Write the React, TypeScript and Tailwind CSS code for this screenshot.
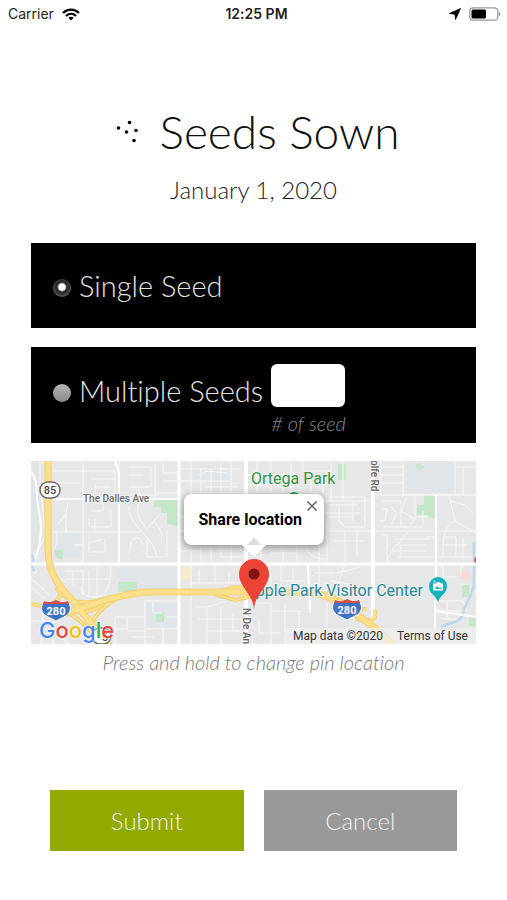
import { useState } from "react";

const BLOCK_STREETS = [
  // north west
  "M9 0V24L12 50L14 75L4 96V103M52 0V10H84V38M52 10V38M22 10H52M22 22H50M60 18H84M64 22V34M64 26H80",
  "M88 0V103M98 6H120V26H98M98 14H112M108 26V34M124 2V32H146M132 0V12H146M132 20H146M98 34H128",
  "M22 38H148M22 71H110M37 41L35 53L27 63M35 53V71M52 38V103M60 50H72V38M58 58V66H80M64 58V71M80 50V66",
  "M58 80V92M58 82L72 78M60 91H74V78M98 46C98 58 104 62 112 72C120 80 124 88 126 96M110 38C104 50 106 56 116 68M116 68L128 54M122 60C130 66 132 76 130 82",
  "M112 84C110 76 102 74 100 82L98 94M116 78V96H126M136 70V96H126M26 71V84M52 84H42",
  // south west
  "M22 103V112L34 120M34 110H52V134M34 118H80M66 103V136M80 106C80 124 76 136 64 136C54 136 50 132 50 126M42 110V124M58 110V134",
  "M0 118L8 124L18 134M0 126L14 138M6 110L0 116M12 150L10 183M22 160V183M30 176L38 183M0 160H14",
  "M84 183V156H114M96 156V170H114M114 183V140H148M84 168H96M122 140V152H132M114 168H148M136 156H148M132 168V183M100 176H124",
  // north centre
  "M160 0V183M148 8H210M148 20H200M170 8V32M180 8V32M190 0V32M200 0V32M160 32H215M168 14L176 10L196 12M174 26H208",
  "M215 14H260M226 0V32M240 0V32M252 14V32M215 24H240M260 0V32M272 0V10H300M280 18V32M292 18V32M300 0V40M312 0V38",
  "M148 56H215M148 70H214M160 80H215M170 86V103M180 86V103M190 80V96H215M200 80V103M148 90H170",
  "M230 86V103M240 92H266M252 84V103M266 84V103M276 84C276 94 284 98 294 98M288 84V103M292 40H340M294 52H330M296 62V103",
  "M298 36H334M298 44H326M298 56H322M308 44V60L314 66H334M322 40V60M334 34V66M298 70H445M314 70V100M326 70V96M302 80H334",
  // south centre
  "M164 146H176V183M166 158H210M176 146L196 140M176 170H212M190 146V183M202 152V170M160 122H212M168 108V122M184 103V122M198 110V122",
  "M222 142H240V183M240 150H272M254 142V183M228 160V172H250M254 170H282M268 150V170M276 103L280 150M296 142V183",
  "M222 112H240V124M230 103V124M250 103V120H274M262 108V126M284 112H304M288 103V126M306 112L330 106M314 103L308 120M300 120L324 124",
  // north east
  "M350 0V34H445M372 0V34M350 6H372M350 14H372M350 22H372M424 0V34M424 6H445M432 6V34M342 34H445",
  "M350 40H370V66M350 48H356L354 60H348M360 46L366 52L360 64M376 36L370 50L384 58L378 66M384 34V56H398M392 50V64M352 66H392",
  "M350 74H356V100M356 100L364 84H396M364 78H400M362 90H396M370 84V96M366 96H404M378 70L366 84M394 76H404",
  "M418 34L424 60C414 66 412 72 412 96M424 60L445 72M420 40L434 44L442 52M412 76H425V96M412 84H436M404 96H445M432 76V96",
  // south east
  "M404 140H432L436 150H410M404 148L424 152L445 156M410 158H430M404 150V168M416 140V156M412 103V116H425M430 103V116",
];

const RAMPS = [
  "M17 98C20 116 30 120 30 130C30 136 24 142 18 146",
  "M0 143C14 146 26 146 38 152C48 158 58 166 70 183",
  "M26 128C36 142 54 144 74 138",
  "M40 150C56 154 66 148 82 138",
  "M60 164C66 150 76 144 88 136",
  "M186 131L204 126L226 128",
  "M186 134L204 139L228 134",
  "M298 132C310 138 318 150 334 148",
  "M326 158C342 162 346 158 344 150",
];

const FREEWAYS = [
  "M17 -4V88C17 112 28 126 42 140L80 187",
  "M36 152C60 144 84 134 116 131H266C298 131 304 140 326 154C338 162 350 170 364 187",
];

function HighwayShield({ x, y }: { x: number; y: number }) {
  return (
    <g transform={`translate(${x} ${y})`}>
      <path
        d="M-12 -9C-8 -7 -4 -8 0 -10C4 -8 8 -7 12 -9C15 -4 15 0 13 3C10 7 5 8 0 11C-5 8 -10 7 -13 3C-15 0 -15 -4 -12 -9Z"
        fill="#3f74c4"
        stroke="#ffffff"
      />
      <path d="M-12 -9C-8 -7 -4 -8 0 -10C4 -8 8 -7 12 -9L13 -6H-13Z" fill="#d4504c" />
      <text y="5" textAnchor="middle" fill="#ffffff" className="text-[11px] font-bold">
        280
      </text>
    </g>
  );
}

function MapDrawing() {
  return (
    <svg
      viewBox="0 0 445 183"
      preserveAspectRatio="xMidYMid slice"
      className="block h-full w-full font-['Roboto','Liberation_Sans',sans-serif]"
      role="img"
      aria-label="Map of the selected area"
    >
      <rect width="445" height="183" fill="#e7e7e7" />

      {/* ground areas */}
      <g fill="#e1e5e8">
        <path d="M0 0H9L14 75L0 96Z" />
        <path d="M24 72H50V96H26Z" />
        <path d="M84 106H148V128L90 134Z" />
        <path d="M162 10L174 4L196 10V20H162Z" />
        <path d="M376 2H426V31H376Z" />
        <path d="M116 142H146V166H116Z" />
      </g>
      <g fill="#c5e6c8">
        <path d="M123 39H147V66L136 62V52H130V46H123Z" />
        <path d="M87 121H106V131H87Z" />
        <path d="M24 89H32V98H28L24 95Z" />
        <path d="M125 151H133V161H125Z" />
        <path d="M307 3H315V19H307Z" />
        <path d="M393 34H404V57H396V54H386V44H393Z" />
        <path d="M384 4L389 2L394 7L387 9Z" />
        <path d="M431 124H438V136H431Z" />
        <path d="M438 156H445V165H438Z" />
      </g>
      <path d="M151 106H160V118H151Z" fill="#f6edc8" />
      <path d="M428 110H440V118H428Z" fill="#f6dcd8" />

      <g fill="none" stroke="#f8f8f8">
        {BLOCK_STREETS.map((d) => (
          <path key={d} d={d} />
        ))}
      </g>
      <path
        d="M443 81V120C443 134 434 142 432 152C428 164 420 160 410 166M0 94L3 98L0 104L3 110"
        fill="none"
        stroke="#bcd7ea"
        strokeWidth="2.500"
      />

      {/* main streets */}
      <g fill="none" stroke="#ffffff" strokeWidth="3">
        <path d="M0 103H445" />
        <path d="M148 0V183" />
        <path d="M215 0V183" strokeWidth="4" />
        <path d="M342 0V162" strokeWidth="4" />
        <path d="M405 34V116M404 140V167" strokeWidth="2" />
        <path d="M404 150L445 156" strokeWidth="2" />
        <path d="M277 103L279 152" strokeWidth="2" />
        <path d="M84 0L88 12V103" strokeWidth="2" />
        <path d="M22 38H148" strokeWidth="2" />
        <path d="M0 10C8 20 4 32 8 50C12 70 10 84 4 98" strokeWidth="2" />
      </g>

      {/* freeways */}
      <g fill="none" strokeLinecap="round">
        <g stroke="#f2cf72" strokeWidth="4">
          {RAMPS.map((d) => (
            <path key={d} d={d} />
          ))}
        </g>
        <g stroke="#fbe08c" strokeWidth="2">
          {RAMPS.map((d) => (
            <path key={d} d={d} />
          ))}
        </g>
        <g stroke="#f2cf72" strokeWidth="7">
          {FREEWAYS.map((d) => (
            <path key={d} d={d} />
          ))}
        </g>
        <g stroke="#fbe08c" strokeWidth="5">
          {FREEWAYS.map((d) => (
            <path key={d} d={d} />
          ))}
        </g>
      </g>

      <g fill="#ffffff" stroke="#6b6b6b" strokeWidth="1.500">
        <rect x="9" y="21" width="20" height="16" rx="8" />
        <rect x="61" y="167" width="19" height="16" rx="8" />
      </g>
      <g fill="#4a4a4a" textAnchor="middle" className="text-[11px] font-medium">
        <text x="19" y="33">
          85
        </text>
        <text x="74" y="180">
          5
        </text>
      </g>
      <HighwayShield x={25} y={149} />
      <HighwayShield x={316} y={148} />

      <circle cx="263" cy="38" r="7" fill="#35a345" />
      <g stroke="#f2f2f2" strokeWidth="2" paintOrder="stroke" strokeLinejoin="round">
        <text x="52" y="41" fill="#6e6e6e" className="text-[10px] font-medium">
          The Dalles Ave
        </text>
        <text x="220" y="23" fill="#35913f" className="text-base font-normal">
          Ortega Park
        </text>
        <text x="392" y="135" textAnchor="end" fill="#2a8595" className="text-base font-normal">
          pple Park Visitor Center
        </text>
        <text transform="translate(340 -1) rotate(90)" fill="#666666" className="text-[10px] font-medium">
          olfe Rd
        </text>
        <text transform="translate(212 147) rotate(90)" fill="#666666" className="text-[10px] font-medium">
          N De An
        </text>
      </g>

      {/* visitor center marker */}
      <path d="M407 141C405 134 398 133 398 125A9 9 0 0 1 416 125C416 133 409 134 407 141Z" fill="#16b0bf" />
      <path d="M402 122.500H405L406 121H409L410 122.500H412V129.500H402Z" fill="#ffffff" />
      <path d="M404 128L406 125L408 127L409 126L411 128Z" fill="#16b0bf" />
      <circle cx="403.500" cy="120.500" r="1" fill="#ffffff" />
      <circle cx="446" cy="99" r="3" fill="#e85858" />
    </svg>
  );
}

function GoogleLogo() {
  return (
    <span
      aria-label="Google"
      className="block font-['Inter','Liberation_Sans',sans-serif] text-[22px] leading-6 font-medium [text-shadow:0_0_2px_#fff,0_0_2px_#fff]"
    >
      <span className="text-[#4285f4]">G</span>
      <span className="text-[#ea4335]">o</span>
      <span className="text-[#fbbc05]">o</span>
      <span className="text-[#4285f4]">g</span>
      <span className="text-[#34a853]">l</span>
      <span className="text-[#ea4335]">e</span>
    </span>
  );
}

function StatusBar() {
  return (
    <header className="grid h-7 grid-cols-3 items-center pr-1.5 pl-2 font-['Inter','Liberation_Sans',sans-serif] text-sm text-[#222]">
      <div className="flex items-center gap-2">
        <span className="font-normal">Carrier</span>
        <svg viewBox="0 0 18 13" className="h-[13px] w-[18px]" aria-hidden="true">
          <g fill="none" stroke="#000" strokeWidth="2.200">
            <path d="M1 5C5.500 0.600 12.500 0.600 17 5" />
            <path d="M4 8C7 5.200 11 5.200 14 8" />
          </g>
          <path d="M6.300 9.800C8 8.500 10 8.500 11.700 9.800L9 12.600Z" />
        </svg>
      </div>
      <span className="pl-1 text-center font-semibold whitespace-nowrap">12:25 PM</span>
      <div className="flex items-center justify-end gap-2">
        <svg viewBox="0 0 12 12" className="size-3" aria-hidden="true">
          <path d="M11.500 0.500L6.500 11.500L6 6.200L0.500 5.500Z" stroke="#000" strokeLinejoin="round" strokeWidth="0.800" />
        </svg>
        <svg viewBox="0 0 32 14" className="h-[14px] w-8" aria-hidden="true">
          <rect x="0.800" y="0.800" width="28" height="12.400" rx="3.500" fill="#fff" stroke="#9a9a9a" strokeWidth="1.300" />
          <rect x="2.500" y="2.500" width="14.500" height="9" rx="1.500" />
          <path d="M30 4.800C31.700 5.500 31.700 8.500 30 9.200Z" fill="#8a8a8a" />
        </svg>
      </div>
    </header>
  );
}

const RADIO =
  "mt-1 size-[18px] shrink-0 appearance-none rounded-full bg-linear-to-b from-[#b5b5b5] to-[#8a8a8a] checked:bg-[radial-gradient(circle_at_50%_45%,#fff_0_3px,#222_5px,#333_7px,#555_9px)]";

export default function App() {
  const [mode, setMode] = useState("single");
  const [count, setCount] = useState("");
  const [showPopup, setShowPopup] = useState(true);

  return (
    <div className="min-h-screen bg-white font-['Lato','Liberation_Sans',sans-serif] font-light [font-variant-ligatures:none]">
      <StatusBar />

      <form className="px-[31px] pb-12" onSubmit={(e) => e.preventDefault()}>
        <div className="flex items-center justify-center gap-5 pt-[78px] pl-2">
          <svg viewBox="0 0 24 24" className="size-6" aria-hidden="true">
            <circle cx="2.500" cy="8" r="1.800" />
            <circle cx="13.500" cy="2.500" r="1.800" />
            <circle cx="10.500" cy="12" r="1.800" />
            <circle cx="20" cy="10.500" r="1.800" />
            <circle cx="18" cy="20.500" r="1.800" />
          </svg>
          <h1 className="text-[46px] leading-[52px] text-[#111]">Seeds Sown</h1>
        </div>
        <p className="pt-4 text-center text-2xl leading-8 text-[#222]">January 1, 2020</p>

        <label className="mt-[37px] flex h-[85px] items-center gap-2 bg-black px-[22px] text-[29px] leading-9 text-[#e4e4e4]">
          <input
            type="radio"
            name="mode"
            checked={mode === "single"}
            onChange={() => setMode("single")}
            className={RADIO}
          />
          Single Seed
        </label>

        <div className="mt-[19px] flex h-24 items-start gap-2 bg-black px-[22px] pt-[17px] text-[29px] leading-[54px] text-[#e4e4e4]">
          <label className="flex items-center gap-2">
            <input
              type="radio"
              name="mode"
              checked={mode === "multiple"}
              onChange={() => setMode("multiple")}
              className={RADIO}
            />
            Multiple Seeds
          </label>
          <div className="flex flex-col">
            <input
              id="seed-count"
              type="text"
              inputMode="numeric"
              value={count}
              onChange={(e) => setCount(e.target.value)}
              className="h-[43px] w-[74px] rounded-md bg-white px-2 text-xl text-black"
            />
            <label htmlFor="seed-count" className="pt-1 text-[20px] leading-6 text-[#8a8a8a] italic">
              # of seed
            </label>
          </div>
        </div>

        <div className="relative mt-[18px] h-[183px] overflow-hidden">
          <MapDrawing />

          <div className="absolute bottom-0.5 left-2">
            <GoogleLogo />
          </div>
          <div className="absolute right-0 bottom-0 flex gap-3.5 bg-[#efefef]/70 px-2 font-['Roboto','Liberation_Sans',sans-serif] text-xs leading-4 font-normal text-[#333]">
            <span>Map data ©2020</span>
            <a href="#terms">Terms of Use</a>
          </div>

          <svg viewBox="0 0 32 52" className="absolute top-[97px] left-1/2 h-[52px] w-8 -translate-x-1/2" aria-hidden="true">
            <path d="M16 51C15 36 1 29 1 16A15 15 0 0 1 31 16C31 29 17 36 16 51Z" fill="#ea4335" />
            <circle cx="16" cy="16" r="5.500" fill="#811411" />
          </svg>

          {showPopup && (
            <div className="absolute top-[33px] left-1/2 -translate-x-1/2 font-['Roboto','Liberation_Sans',sans-serif]">
              <div className="flex h-[51px] w-[140px] items-center rounded-lg bg-white pl-[15px] text-base font-bold whitespace-nowrap text-black shadow-[0_2px_7px_1px_rgba(0,0,0,0.35)]">
                Share location
              </div>
              <button
                type="button"
                aria-label="Close"
                onClick={() => setShowPopup(false)}
                className="absolute top-1.5 right-1.5"
              >
                <svg viewBox="0 0 12 12" className="size-3" aria-hidden="true">
                  <path d="M1.500 1.500L10.500 10.500M10.500 1.500L1.500 10.500" stroke="#555" strokeWidth="1.300" />
                </svg>
              </button>
              <svg viewBox="0 0 24 24" className="absolute top-10 left-1/2 size-6 -translate-x-1/2" aria-hidden="true">
                <path d="M0 11H24L12 23Z" fill="#fff" />
                <path d="M5 11L12 3L19 11Z" fill="#dedede" />
              </svg>
            </div>
          )}
        </div>
        <p className="pt-1 text-center text-[20px] leading-7 text-[#777] italic">
          Press and hold to change pin location
        </p>

        <div className="mt-[114px] grid grid-cols-2 gap-5 px-[19px] text-2xl text-[#f0f0f0]">
          <button type="submit" className="h-[61px] bg-[#93a800]">
            Submit
          </button>
          <button type="button" className="h-[61px] bg-[#999]">
            Cancel
          </button>
        </div>
      </form>
    </div>
  );
}
